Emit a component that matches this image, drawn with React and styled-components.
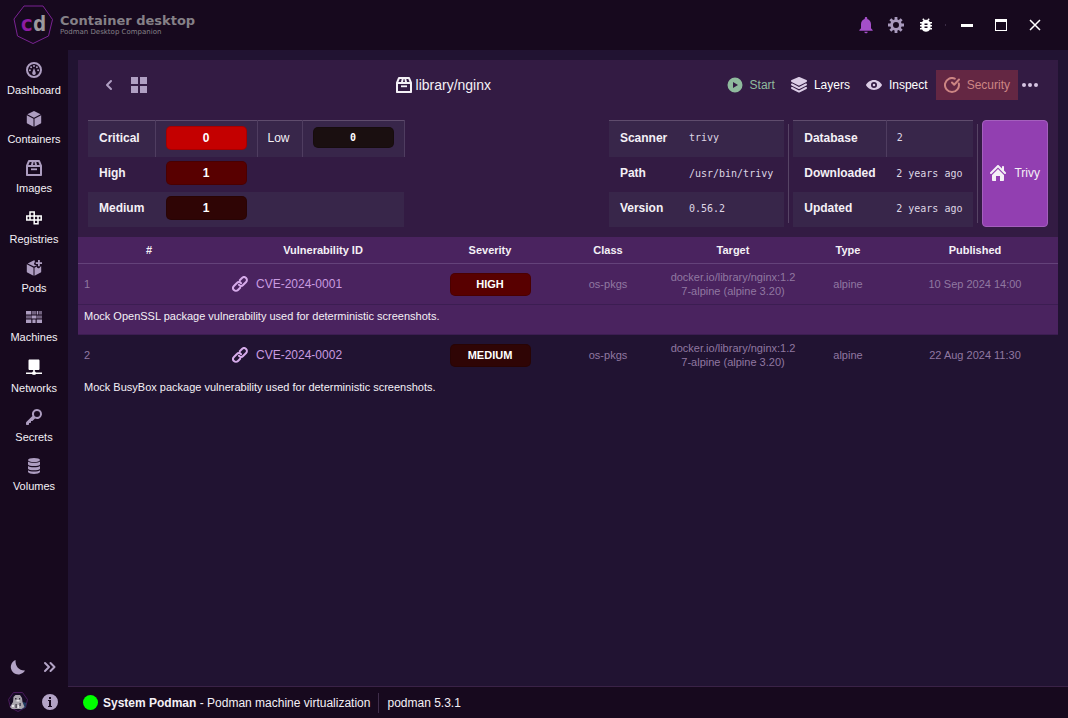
import React from "react";
import styled, { createGlobalStyle } from "styled-components";
import { MdBugReport, MdNotifications } from "react-icons/md";

const icons = {
  dashboard: (
    <>
      <circle cx="8" cy="8" r="7" fill="none" stroke="currentColor" strokeWidth="2" />
      <circle cx="3.9" cy="8.2" r="1" />
      <circle cx="5.1" cy="5.2" r="1" />
      <circle cx="8" cy="3.9" r="1" />
      <circle cx="10.9" cy="5.2" r="1" />
      <circle cx="12.1" cy="8.2" r="1" />
      <path d="M8 6l1.7 4.6a1.8 1.8 0 1 1-3.4 0z" />
    </>
  ),
  cube: (
    <path d="M8 0l6.6 3.3L8 6.7 1.4 3.3zM.8 4.2l6.7 3.5v8.1L1.3 12.6a1 1 0 0 1-.5-.9zM15.2 4.2L8.5 7.7v8.1l6.2-3.2a1 1 0 0 0 .5-.9z" />
  ),
  box: (
    <>
      <path
        fillRule="evenodd"
        d="M3 0h10c.4 0 .8.3.9.6L16 5.6V15c0 .6-.4 1-1 1H1c-.6 0-1-.4-1-1V5.6L2.1.6C2.2.3 2.6 0 3 0zm.7 2L2.4 5H5l.7-3zm4 0L7 5h2l-.6-3zm2.6 0l.7 3h2.6l-1.3-3zM2 7v7h12V7z"
      />
      <path d="M5 8.4h6v1.800H5z" />
    </>
  ),
  registries: (
    <path
      fill="none"
      stroke="currentColor"
      strokeWidth="1.5"
      d="M4 2h4.200v4H4zM.8 6H4v4H.8zM4 6h4.200v4H4zM8.200 6H12v4H8.200zM12 6h3.200v4H12zM8.200 10H12v3.700H8.200z"
    />
  ),
  pods: (
    <>
      <path d="M8.6 0L1.7 3.4 8 6.6l3-1.5H9.5a1.5 1.5 0 0 1 0-3h.6A1.5 1.5 0 0 1 8.6 0zM.8 4.2l6.7 3.5v8.1L1.3 12.6a1 1 0 0 1-.5-.9zM8.5 7.7L11 6.4a1.5 1.5 0 0 0 3 .6l1.2-.7v5.4a1 1 0 0 1-.5.9l-6.2 3.2z" />
      <path d="M12 0h1.8v2.2H16V4h-2.2v2.2H12V4H9.8V2.2H12z" />
    </>
  ),
  machines: (
    <>
      <path d="M0 2h5v3.500H0zM11 2h1v3.500h-1zM5.500 6.500h5v3h-5zM0 10.500h5V14H0zM11 10.500h5V14h-5zM7 10.500h2V14H7z" />
      <path
        opacity="0.6"
        d="M5.500 2h5v3.500h-5zM12.500 2H16v3.500h-3.500zM0 6.500h5v3H0zM11 6.500h5v3h-5zM5.500 10.500H7V14H5.500zM9 10.500h1.500V14H9z"
      />
    </>
  ),
  networks: (
    <path d="M3.500.5h9c.5 0 1 .5 1 1V10c0 .5-.5 1-1 1H8.800v1.500c.5.1.9.4 1.100.9H16V15H9.900c-.6 1.200-3.200 1.200-3.800 0H0v-1.600h6.100c.2-.5.6-.8 1.100-.9V11H3.500c-.5 0-1-.5-1-1V1.500c0-.5.5-1 1-1z" />
  ),
  key: (
    <path
      fillRule="evenodd"
      d="M11 0a5 5 0 0 0-4.600 7L.3 13.100l-.3.7V15c0 .6.4 1 1 1h1c.6 0 1-.4 1-1v-1h1c.6 0 1-.4 1-1v-1h1c.3 0 .5-.1.7-.3L9 9.600A5 5 0 1 0 11 0zm0 2a3 3 0 1 1 0 6 3 3 0 0 1 0-6z"
    />
  ),
  volumes: (
    <>
      <ellipse cx="8" cy="2" rx="6" ry="2" />
      <path d="M2 3.500C3.200 5.300 12.800 5.300 14 3.500V6.500C13 8.600 3 8.600 2 6.500zM2 8C3.200 9.800 12.800 9.800 14 8v2.700c-1 2.100-11 2.100-12 0zM2 12.200c1.200 1.800 10.800 1.800 12 0V14c-1 2.600-11 2.600-12 0z" />
    </>
  ),
  moon: <path d="M15 11.400A7.500 7.500 0 1 1 5.600 1C5 6.500 8.500 11.700 15 11.400z" />,
  chevrons: (
    <path
      fill="none"
      stroke="currentColor"
      strokeWidth="2"
      strokeLinecap="round"
      strokeLinejoin="round"
      d="M3 4l4 4-4 4M8.500 4l4 4-4 4"
    />
  ),
  info: (
    <path
      fillRule="evenodd"
      d="M8 0a8 8 0 1 1 0 16A8 8 0 0 1 8 0zM7 3v2h2V3zM6 6v1h1v5H6v1h4v-1H9V6z"
    />
  ),
  back: (
    <path
      fill="none"
      stroke="currentColor"
      strokeWidth="2"
      strokeLinecap="round"
      strokeLinejoin="round"
      d="M10 4L6 8l4 4"
    />
  ),
  grid: <path d="M0 0h7v7H0zM9 0h7v7H9zM0 9h7v7H0zM9 9h7v7H9z" />,
  play: (
    <path fillRule="evenodd" d="M8 .5a7.500 7.500 0 1 1 0 15A7.500 7.500 0 0 1 8 .5zM6 5v6l5-3z" />
  ),
  layers: (
    <path d="M.55 4.89l7 3.500c.14.07.29.11.45.11s.31-.04.45-.11l7-3.500a.998.998 0 0 0-.06-1.810L8.400.08a1.006 1.006 0 0 0-.79 0l-6.990 3a.992.992 0 0 0-.07 1.810zM15 10c-.16 0-.31.04-.45.11L8 13.380 1.450 10.100c-.14-.06-.29-.1-.45-.1-.55 0-1 .45-1 1 0 .39.23.73.55.89l7 3.500c.14.07.29.11.45.11s.31-.04.45-.11l7-3.500c.32-.16.55-.5.55-.89 0-.55-.45-1-1-1zm0-3.500c-.16 0-.31.04-.45.11L8 9.880 1.450 6.610A.997.997 0 0 0 1 6.500c-.55 0-1 .45-1 1 0 .39.23.73.55.89l7 3.500c.14.07.29.11.45.11s.31-.04.45-.11l7-3.500c.32-.16.55-.5.55-.89 0-.55-.45-1-1-1z" />
  ),
  eye: (
    <path
      fillRule="evenodd"
      d="M8 3c4 0 6.600 2.600 7.800 4.400.2.400.2.800 0 1.200C14.600 10.400 12 13 8 13S1.400 10.400.2 8.600a1.200 1.200 0 0 1 0-1.200C1.400 5.600 4 3 8 3zm0 2a3 3 0 1 0 0 6 3 3 0 0 0 0-6zm0 1.700a1.300 1.300 0 1 1 0 2.600 1.300 1.300 0 0 1 0-2.600z"
    />
  ),
  security: (
    <path
      fill="none"
      stroke="currentColor"
      strokeWidth="2"
      strokeLinecap="round"
      strokeLinejoin="round"
      d="M14.800 6.500A7 7 0 1 1 10.800 1.600M8 5.500l2.200 2.200 4.800-5.200"
    />
  ),
  more: (
    <>
      <circle cx="2" cy="8" r="2" />
      <circle cx="8" cy="8" r="2" />
      <circle cx="14" cy="8" r="2" />
    </>
  ),
  home: (
    <path d="M2 10v5c0 .55.45 1 1 1h3v-5h4v5h3c.55 0 1-.45 1-1v-5L8 4l-6 6zm13.710-2.710L14 5.590V2c0-.55-.45-1-1-1s-1 .45-1 1v1.590L8.710.29C8.530.11 8.280 0 8 0s-.53.11-.71.29l-7 7a1.003 1.003 0 0 0 1.420 1.420L8 2.410l6.290 6.290c.18.19.43.3.71.3a1.003 1.003 0 0 0 .71-1.710z" />
  ),
  link: (
    <path
      fill="none"
      stroke="currentColor"
      strokeWidth="2"
      strokeLinecap="round"
      d="M7 8.900a2.700 2.700 0 0 0 4.100.1l3-3A2.800 2.800 0 0 0 10 2L7.800 4.200M9 7.100A2.700 2.700 0 0 0 4.900 7l-3 3A2.800 2.800 0 0 0 6 14l2.200-2.200"
    />
  ),
  cog: (
    <>
      <circle cx="8" cy="8" r="4.400" fill="none" stroke="currentColor" strokeWidth="2.800" />
      {[0, 45, 90, 135].map((angle) => (
        <path key={angle} transform={`rotate(${angle} 8 8)`} d="M6.600 0h2.800v3.200H6.600zM6.600 12.800h2.800V16H6.600z" />
      ))}
    </>
  ),
  minimize: <path d="M2 7h12v3H2z" />,
  maximize: <path fillRule="evenodd" d="M2 2h12v12H2zM3 5v8h10V5z" />,
  close: (
    <path fill="none" stroke="currentColor" strokeWidth="1.500" d="M3 3l10 10M13 3L3 13" />
  ),
};

function Icon({ name }) {
  return (
    <svg width="16" height="16" viewBox="0 0 16 16" fill="currentColor" aria-hidden="true">
      {icons[name]}
    </svg>
  );
}

const navigation = [
  { label: "Dashboard", icon: "dashboard" },
  { label: "Containers", icon: "cube" },
  { label: "Images", icon: "box" },
  { label: "Registries", icon: "registries", bright: true },
  { label: "Pods", icon: "pods" },
  { label: "Machines", icon: "machines" },
  { label: "Networks", icon: "networks", bright: true },
  { label: "Secrets", icon: "key" },
  { label: "Volumes", icon: "volumes" },
];

const severityColors = {
  critical: "#c40000",
  high: "#580000",
  medium: "#2f0505",
  low: "#1a0f10",
};

const vulnerabilities = [
  {
    id: "CVE-2024-0001",
    severity: "high",
    kind: "os-pkgs",
    target: "docker.io/library/nginx:1.27-alpine (alpine 3.20)",
    type: "alpine",
    published: "10 Sep 2024 14:00",
    description: "Mock OpenSSL package vulnerability used for deterministic screenshots.",
  },
  {
    id: "CVE-2024-0002",
    severity: "medium",
    kind: "os-pkgs",
    target: "docker.io/library/nginx:1.27-alpine (alpine 3.20)",
    type: "alpine",
    published: "22 Aug 2024 11:30",
    description: "Mock BusyBox package vulnerability used for deterministic screenshots.",
  },
];

function Header() {
  return (
    <TopBar>
      <Brand>
        <svg width="40" height="40" viewBox="0 0 40 40" aria-hidden="true">
          <path d="M11 1h19l9.500 13.500L35.500 31 20 38.500 4.500 31 1 14z" fill="none" stroke="#7a2393" />
          <LogoText x="7" y="26" fill="#8d1ba3">c</LogoText>
          <LogoText x="20" y="26" fill="#9c9a9e">d</LogoText>
        </svg>
        <div>
          <h1>Container desktop</h1>
          <p>Podman Desktop Companion</p>
        </div>
      </Brand>
      <WindowControls>
        <HeaderButton $color="#a44fc9" aria-label="Notifications">
          <MdNotifications size={20} />
        </HeaderButton>
        <HeaderButton $color="#a99abd" aria-label="Settings">
          <Icon name="cog" />
        </HeaderButton>
        <HeaderButton aria-label="Report a bug">
          <MdBugReport size={18} />
        </HeaderButton>
        <Separator />
        <HeaderButton $wide aria-label="Minimize">
          <Icon name="minimize" />
        </HeaderButton>
        <HeaderButton $wide aria-label="Maximize">
          <Icon name="maximize" />
        </HeaderButton>
        <HeaderButton $wide aria-label="Close">
          <Icon name="close" />
        </HeaderButton>
      </WindowControls>
    </TopBar>
  );
}

function Sidebar() {
  return (
    <SideBar>
      <nav>
        {navigation.map(({ label, icon, bright }) => (
          <NavLink href="#" key={label} $bright={bright}>
            <Icon name={icon} />
            <span>{label}</span>
          </NavLink>
        ))}
      </nav>
      <SideTools>
        <ToolButton aria-label="Toggle theme">
          <Icon name="moon" />
        </ToolButton>
        <ToolButton aria-label="Expand sidebar">
          <Icon name="chevrons" />
        </ToolButton>
        <ToolButton aria-label="Podman">
          <svg width="22" height="22" viewBox="0 0 22 22" aria-hidden="true">
            <path d="M6.500 1.500h9l5 7-2 8L11 20.500l-7.500-4-2-8z" fill="#160b24" stroke="#4a1a5c" />
            <path d="M13 15l3-4 3.500 1-1 4.500-5 2.500z" fill="#1f3a5e" />
            <path d="M8.500 4h4.500l2 3 .5 4 2 5-3 2H5l-2-2 3-5 .5-5z" fill="#aaa6ae" />
            <path d="M8 7h1.500v1.500H8zM12 7h1.200v1.500H12zM8.500 13h1.200v4H8.500zM12.500 12h1.200v3h-1.200z" fill="#34303c" />
            <path d="M9.500 9h3v1.500h-3zM5 14h2v2H5zM10.500 14H12v3h-1.500z" fill="#e8e5ea" />
          </svg>
        </ToolButton>
        <ToolButton aria-label="About">
          <Icon name="info" />
        </ToolButton>
      </SideTools>
    </SideBar>
  );
}

function Summary() {
  return (
    <SummaryRow>
      <StatsTable>
        <tbody>
          <tr>
            <StatsLabel $line $width="67px">Critical</StatsLabel>
            <StatsCell $line>
              <Badge $level="critical">0</Badge>
            </StatsCell>
            <StatsCell $line $width="45px">Low</StatsCell>
            <StatsCell $line>
              <Badge $level="low" $mono>0</Badge>
            </StatsCell>
          </tr>
          <tr>
            <StatsLabel>High</StatsLabel>
            <StatsCell>
              <Badge $level="high">1</Badge>
            </StatsCell>
            <td colSpan={2} />
          </tr>
          <tr>
            <StatsLabel>Medium</StatsLabel>
            <StatsCell>
              <Badge $level="medium">1</Badge>
            </StatsCell>
            <td colSpan={2} />
          </tr>
        </tbody>
      </StatsTable>
      <ScannerInfo>
        <StatsTable>
          <tbody>
            <tr>
              <StatsLabel $width="70px">Scanner</StatsLabel>
              <CodeCell>trivy</CodeCell>
            </tr>
            <tr>
              <StatsLabel>Path</StatsLabel>
              <CodeCell>/usr/bin/trivy</CodeCell>
            </tr>
            <tr>
              <StatsLabel>Version</StatsLabel>
              <CodeCell>0.56.2</CodeCell>
            </tr>
          </tbody>
        </StatsTable>
        <Divider />
        <StatsTable>
          <tbody>
            <tr>
              <StatsLabel $line $width="93px">Database</StatsLabel>
              <CodeCell>2</CodeCell>
            </tr>
            <tr>
              <StatsLabel>Downloaded</StatsLabel>
              <CodeCell>2 years ago</CodeCell>
            </tr>
            <tr>
              <StatsLabel>Updated</StatsLabel>
              <CodeCell>2 years ago</CodeCell>
            </tr>
          </tbody>
        </StatsTable>
        <Divider />
        <HomeButton>
          <Icon name="home" />
          Trivy
        </HomeButton>
      </ScannerInfo>
    </SummaryRow>
  );
}

function Report() {
  return (
    <ReportTable>
      <colgroup>
        <Col $width={142} />
        <col />
        <Col $width={128} />
        <Col $width={108} />
        <Col $width={142} />
        <Col $width={88} />
        <Col $width={166} />
      </colgroup>
      <thead>
        <tr>
          <th>#</th>
          <th>Vulnerability ID</th>
          <th>Severity</th>
          <th>Class</th>
          <th>Target</th>
          <th>Type</th>
          <th>Published</th>
        </tr>
      </thead>
      {vulnerabilities.map((item, index) => (
        <ReportGroup key={item.id} $striped={index % 2 === 0}>
          <tr>
            <ReportCell $left>{index + 1}</ReportCell>
            <ReportCell $left>
              <VulnerabilityLink href="#">
                <Icon name="link" />
                {item.id}
              </VulnerabilityLink>
            </ReportCell>
            <ReportCell>
              <Badge $level={item.severity} $small>
                {item.severity.toUpperCase()}
              </Badge>
            </ReportCell>
            <ReportCell>{item.kind}</ReportCell>
            <ReportCell>{item.target}</ReportCell>
            <ReportCell>{item.type}</ReportCell>
            <ReportCell>{item.published}</ReportCell>
          </tr>
          <tr>
            <Description colSpan={7}>{item.description}</Description>
          </tr>
        </ReportGroup>
      ))}
    </ReportTable>
  );
}

function App() {
  return (
    <Shell>
      <GlobalStyle />
      <Header />
      <Sidebar />
      <Main>
        <Panel>
          <Toolbar>
            <SquareButton aria-label="Back">
              <Icon name="back" />
            </SquareButton>
            <SquareButton aria-label="All images">
              <Icon name="grid" />
            </SquareButton>
            <Title>
              <Icon name="box" />
              library/nginx
            </Title>
            <Action $color="#8fba9d">
              <Icon name="play" />
              Start
            </Action>
            <Action>
              <Icon name="layers" />
              Layers
            </Action>
            <Action>
              <Icon name="eye" />
              Inspect
            </Action>
            <Action $color="#cd8583" $active>
              <Icon name="security" />
              Security
            </Action>
            <MoreButton aria-label="More actions">
              <Icon name="more" />
            </MoreButton>
          </Toolbar>
          <Summary />
        </Panel>
        <Report />
      </Main>
      <Footer>
        <StatusDot />
        <span>
          <strong>System Podman</strong> - Podman machine virtualization
        </span>
        <Engine>podman 5.3.1</Engine>
      </Footer>
    </Shell>
  );
}

const GlobalStyle = createGlobalStyle`
  * {
    box-sizing: border-box;
  }
  body {
    margin: 0;
    background-color: #17091e;
    color: #f4f0f6;
    font-family: "Liberation Sans", Arial, sans-serif;
    font-size: 12px;
  }
  h1, h2, p {
    margin: 0;
  }
  button {
    padding: 0;
    border: 0;
    background: none;
    color: inherit;
    font: inherit;
    cursor: pointer;
  }
  a {
    text-decoration: none;
  }
  svg {
    display: block;
    flex-shrink: 0;
  }
  table {
    border-collapse: collapse;
  }
`;

const Shell = styled.div`
  display: grid;
  grid-template-columns: 68px 1fr;
  grid-template-rows: 50px 1fr 32px;
  min-height: 100vh;
`;

const TopBar = styled.header`
  grid-column: 1 / -1;
  display: flex;
  align-items: center;
  justify-content: space-between;
  padding: 0 16px 0 13px;
`;

const Brand = styled.div`
  display: flex;
  align-items: center;
  gap: 7px;
  color: #858087;
  font-family: "DejaVu Sans", Verdana, sans-serif;
  div {
    padding-bottom: 2px;
  }
  h1 {
    font-size: 13px;
    line-height: 15px;
  }
  p {
    font-size: 7px;
    line-height: 8px;
  }
`;

const LogoText = styled.text`
  font-family: "DejaVu Sans Mono", monospace;
  font-size: 22px;
  font-weight: bold;
`;

const WindowControls = styled.div`
  display: flex;
  align-items: center;
`;

const HeaderButton = styled.button`
  display: flex;
  align-items: center;
  justify-content: center;
  width: ${({ $wide }) => ($wide ? "34px" : "30px")};
  height: 30px;
  color: ${({ $color }) => $color || "#fff"};
`;

const Separator = styled.span`
  width: 1px;
  height: 2px;
  margin: 0 4px;
  background-color: #3b2b45;
`;

const SideBar = styled.aside`
  grid-row: 2 / 4;
  display: flex;
  flex-direction: column;
  justify-content: space-between;
  padding-top: 12px;
`;

const NavLink = styled.a`
  display: flex;
  flex-direction: column;
  align-items: center;
  gap: ${({ $bright }) => ($bright ? "6px" : "5px")};
  height: ${({ $bright }) => ($bright ? "51px" : "49px")};
  padding-top: ${({ $bright }) => ($bright ? "1px" : "0")};
  color: ${({ $bright }) => ($bright ? "#fff" : "#ad9dc0")};
  span {
    color: #f4f0f6;
    font-size: 11px;
    line-height: 14px;
  }
`;

const SideTools = styled.div`
  display: grid;
  grid-template-columns: 1fr 1fr;
  row-gap: 3px;
  padding: 0 2px;
`;

const ToolButton = styled.button`
  display: flex;
  align-items: center;
  justify-content: center;
  height: 32px;
  color: #b3a3c6;
`;

const Main = styled.main`
  padding: 10px;
  background-color: #211332;
`;

const Panel = styled.section`
  padding-bottom: 10px;
  background-color: #331b43;
`;

const Toolbar = styled.div`
  display: flex;
  align-items: center;
  height: 50px;
  padding: 0 10px 0 16px;
`;

const SquareButton = styled.button`
  display: flex;
  align-items: center;
  justify-content: center;
  width: 30px;
  height: 30px;
  color: #b09fc3;
`;

const Title = styled.h2`
  flex: 1;
  display: flex;
  align-items: center;
  justify-content: center;
  gap: 4px;
  padding-left: 14px;
  font-size: 14px;
  font-weight: normal;
`;

const Action = styled.button`
  display: flex;
  align-items: center;
  gap: 7px;
  height: 30px;
  padding: 0 8px;
  background-color: ${({ $active }) => ($active ? "#642743" : "transparent")};
  color: ${({ $color }) => $color || "#fff"};
  svg {
    color: ${({ $color }) => $color || "#dccde6"};
  }
`;

const MoreButton = styled.button`
  height: 30px;
  padding: 0 10px 0 4px;
  color: #d6c5e2;
`;

const SummaryRow = styled.div`
  display: flex;
  justify-content: space-between;
  padding: 10px 10px 0;
`;

const StatsTable = styled.table`
  border-top: 1px solid #5f4c6d;
  tr {
    height: 35px;
  }
  tr:first-child {
    height: 36px;
  }
  tr:nth-child(odd) {
    background-color: #38264a;
  }
  td {
    padding: 0;
  }
`;

const StatsLabel = styled.th`
  width: ${({ $width }) => $width || "auto"};
  padding: 0 0 2px 11px;
  border-right: ${({ $line }) => ($line ? "1px solid #4f3d60" : "0")};
  text-align: left;
`;

const StatsCell = styled.td`
  && {
    padding: 0 10px 2px;
  }
  width: ${({ $width }) => $width || "auto"};
  border-right: ${({ $line }) => ($line ? "1px solid #4f3d60" : "0")};
`;

const CodeCell = styled.td`
  && {
    padding: 0 11px 2px 10px;
  }
  color: #dfd7e5;
  font-family: "DejaVu Sans Mono", monospace;
  font-size: 10px;
`;

const Badge = styled.span`
  display: block;
  width: 81px;
  margin: 0 auto;
  border: 1px solid rgba(0, 0, 0, 0.15);
  border-radius: 5px;
  background-color: ${({ $level }) => severityColors[$level]};
  color: #fff;
  font-family: ${({ $mono }) => ($mono ? '"DejaVu Sans Mono", monospace' : "inherit")};
  font-size: ${({ $mono, $small }) => ($mono ? "10px" : $small ? "11px" : "12px")};
  font-weight: bold;
  line-height: ${({ $mono, $small }) => ($mono ? "19px" : $small ? "21px" : "22px")};
  text-align: center;
`;

const ScannerInfo = styled.div`
  display: flex;
  gap: 4px;
`;

const Divider = styled.span`
  width: 1px;
  margin: 4px 0;
  background-color: #574465;
`;

const HomeButton = styled.button`
  display: flex;
  align-items: center;
  gap: 8px;
  padding: 0 7px;
  border: 1px solid #a45fbd;
  border-radius: 4px;
  background-color: #923fb1;
`;

const ReportTable = styled.table`
  width: 100%;
  table-layout: fixed;
  font-size: 11px;
  line-height: 14px;
  th {
    height: 27px;
    padding: 0 6px;
    border-bottom: 1px solid #64427a;
    background-color: #4a235f;
  }
`;

const Col = styled.col`
  width: ${({ $width }) => $width}px;
`;

const ReportGroup = styled.tbody`
  background-color: ${({ $striped }) => ($striped ? "#4a235f" : "transparent")};
  tr {
    border-bottom: 1px solid ${({ $striped }) => ($striped ? "#3c1d52" : "transparent")};
  }
`;

const ReportCell = styled.td`
  height: 41px;
  padding: 0 6px;
  color: #9078a1;
  text-align: ${({ $left }) => ($left ? "left" : "center")};
  overflow-wrap: anywhere;
`;

const VulnerabilityLink = styled.a`
  display: flex;
  align-items: center;
  gap: 8px;
  padding-left: 6px;
  color: #c99be0;
  font-size: 12px;
  svg {
    color: #d6abea;
  }
`;

const Description = styled.td`
  height: 30px;
  padding: 4px 6px;
  vertical-align: top;
`;

const Footer = styled.footer`
  display: flex;
  align-items: center;
  gap: 5px;
  padding-left: 15px;
  border-top: 1px solid #3a2247;
`;

const StatusDot = styled.span`
  width: 15px;
  height: 15px;
  border-radius: 50%;
  background-color: #00ff00;
`;

const Engine = styled.span`
  margin-left: 3px;
  padding: 3px 8px;
  border-left: 1px solid #3f2d4a;
`;

export default App;
